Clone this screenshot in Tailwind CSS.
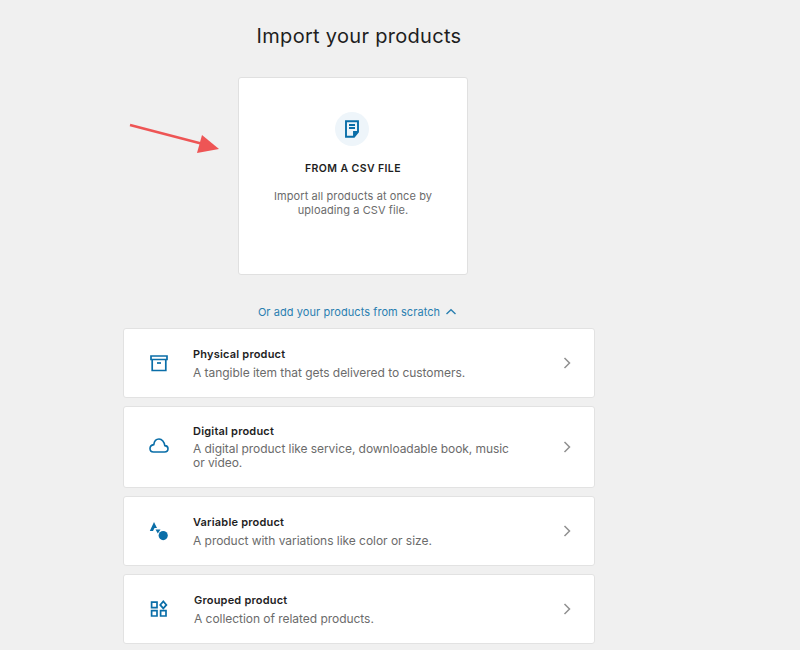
<!DOCTYPE html>
<html lang="en">

<head>
    <meta charset="UTF-8">
    <meta name="viewport" content="width=device-width, initial-scale=1.0">
    <title>Import your products</title>
    <script src="https://cdn.jsdelivr.net/npm/@tailwindcss/browser@4"></script>
</head>

<body class="relative h-[650px] overflow-hidden bg-[#f0f0f0] font-['Inter',sans-serif]">
    <!-- annotation arrow -->
    <svg class="absolute left-[125px] top-[118px]" width="100" height="40" viewBox="0 0 100 40">
        <path d="M5 7 L78 26" stroke="#ee5555" stroke-width="2.5" fill="none" />
        <path d="M94 31 L72 35 L77 17 Z" fill="#ee5555" />
    </svg>

    <main class="ml-[123px] w-[472px] pt-[24px]">
        <h1 class="h-[24px] text-center text-[20px] leading-[24px] tracking-[0.3px] text-[#1e1e1e]">Import your products</h1>

        <!-- csv card -->
        <div class="ml-[115px] mt-[29px] flex h-[198px] w-[230px] flex-col items-center rounded-[3px] border border-[#e0e0e0] bg-white pt-[34px]">
            <div class="mr-[2px] flex h-[34px] w-[34px] items-center justify-center rounded-full bg-[#eef5fa]">
                <svg width="16" height="18" viewBox="0 0 16 18" fill="none" stroke="#0a6ea8" stroke-width="1.9">
                    <path d="M2 1.2 H14 V12 L10 16.8 H2 Z" />
                    <path d="M14 12 H10 V16.8" fill="#0a6ea8" />
                    <path d="M5 5 H11 M5 8 H11" />
                </svg>
            </div>
            <h2 class="mt-[16px] text-[10.5px] leading-[14px] font-semibold tracking-[0.4px] text-[#1e1e1e]">FROM A CSV FILE</h2>
            <p class="mt-[13px] w-[180px] text-center text-[11px] leading-[14px] tracking-[0.1px] text-[#6b6b6b]">Import all products at once by uploading a CSV file.</p>
        </div>

        <a href="#" class="mt-[29px] flex h-[16px] items-center justify-center gap-[5px] pr-[3px] text-[11px] leading-[16px] tracking-[0.07px] text-[#2a7fb0]">
            Or add your products from scratch
            <svg width="12" height="8" viewBox="0 0 12 8" fill="none" stroke="#2a7fb0" stroke-width="1.4">
                <path d="M1.5 6 L6 1.8 L10.5 6" />
            </svg>
        </a>

        <div class="mt-[8px] flex flex-col gap-[8px]">
            <div class="flex h-[70px] items-center rounded-[3px] border border-[#e2e2e2] bg-white pr-[23px] pl-[25px]">
                <svg class="shrink-0" width="20" height="20" viewBox="0 0 20 20" fill="none" stroke="#0a6ea8" stroke-width="1.7">
                    <path d="M2 3 H18 V6.5 H2 Z" />
                    <path d="M3.2 6.5 V17.5 H16.8 V6.5" />
                    <path d="M8 10 H12" />
                </svg>
                <div class="ml-[24px] flex-1 pt-[2px]">
                    <h3 class="text-[11px] leading-[14px] font-semibold tracking-[0.2px] text-[#1e1e1e]">Physical product</h3>
                    <p class="mt-[4px] text-[12px] leading-[16px] tracking-[-0.04px] text-[#6b6b6b]">A tangible item that gets delivered to customers.</p>
                </div>
                <svg width="8" height="12" viewBox="0 0 8 12" fill="none" stroke="#909090" stroke-width="1.5">
                    <path d="M1.5 1 L6.5 6 L1.5 11" />
                </svg>
            </div>

            <div class="flex h-[82px] items-center rounded-[3px] border border-[#e2e2e2] bg-white pr-[23px] pl-[25px]">
                <svg class="shrink-0" width="20" height="20" viewBox="0 0 20 20" fill="none" stroke="#0a6ea8" stroke-width="1.6">
                    <path d="M4.5 15 H15.5 C17.5 15 19 13.6 19 11.8 C19 10 17.6 8.7 15.8 8.6 C15.4 5 13 2 10 2 C7.2 2 5.2 4.4 4.8 7.6 C2.6 8 1 9.6 1 11.6 C1 13.6 2.6 15 4.5 15 Z" />
                </svg>
                <div class="ml-[24px] flex-1 pb-[1px]">
                    <h3 class="text-[11px] leading-[14px] font-semibold tracking-[0.2px] text-[#1e1e1e]">Digital product</h3>
                    <p class="mt-[4px] w-[325px] text-[12px] leading-[14px] tracking-[-0.06px] text-[#6b6b6b]">A digital product like service, downloadable book, music or video.</p>
                </div>
                <svg width="8" height="12" viewBox="0 0 8 12" fill="none" stroke="#909090" stroke-width="1.5">
                    <path d="M1.5 1 L6.5 6 L1.5 11" />
                </svg>
            </div>

            <div class="flex h-[70px] items-center rounded-[3px] border border-[#e2e2e2] bg-white pr-[23px] pl-[25px]">
                <svg class="shrink-0" width="20" height="20" viewBox="0 0 20 20" fill="#0a6ea8">
                    <path d="M5 1 L8 7 L5.5 7 L4 10 L0.8 10 Z" />
                    <path d="M6.5 8.4 L11.5 8.4 L8.8 12.6 Z" />
                    <circle cx="14.2" cy="14.6" r="4.6" />
                </svg>
                <div class="ml-[24px] flex-1 pt-[2px]">
                    <h3 class="text-[11px] leading-[14px] font-semibold tracking-[0.2px] text-[#1e1e1e]">Variable product</h3>
                    <p class="mt-[4px] text-[12px] leading-[16px] tracking-[-0.04px] text-[#6b6b6b]">A product with variations like color or size.</p>
                </div>
                <svg width="8" height="12" viewBox="0 0 8 12" fill="none" stroke="#909090" stroke-width="1.5">
                    <path d="M1.5 1 L6.5 6 L1.5 11" />
                </svg>
            </div>

            <div class="flex h-[70px] items-center rounded-[3px] border border-[#e2e2e2] bg-white pr-[23px] pl-[25px]">
                <svg class="shrink-0" width="20" height="20" viewBox="0 0 20 20" fill="none" stroke="#0a6ea8" stroke-width="1.7">
                    <path d="M2.6 3.2 H8 V8.6 H2.6 Z" />
                    <path d="M2.6 11.6 H8 V17 H2.6 Z" />
                    <path d="M11.6 11.6 H17 V17 H11.6 Z" />
                    <path d="M14.3 2.4 L17.4 5.9 L14.3 9.4 L11.2 5.9 Z" />
                </svg>
                <div class="ml-[25px] flex-1 pt-[2px]">
                    <h3 class="text-[11px] leading-[14px] font-semibold tracking-[0.2px] text-[#1e1e1e]">Grouped product</h3>
                    <p class="mt-[4px] text-[12px] leading-[16px] tracking-[-0.04px] text-[#6b6b6b]">A collection of related products.</p>
                </div>
                <svg width="8" height="12" viewBox="0 0 8 12" fill="none" stroke="#909090" stroke-width="1.5">
                    <path d="M1.5 1 L6.5 6 L1.5 11" />
                </svg>
            </div>
        </div>
    </main>
</body>

</html>
